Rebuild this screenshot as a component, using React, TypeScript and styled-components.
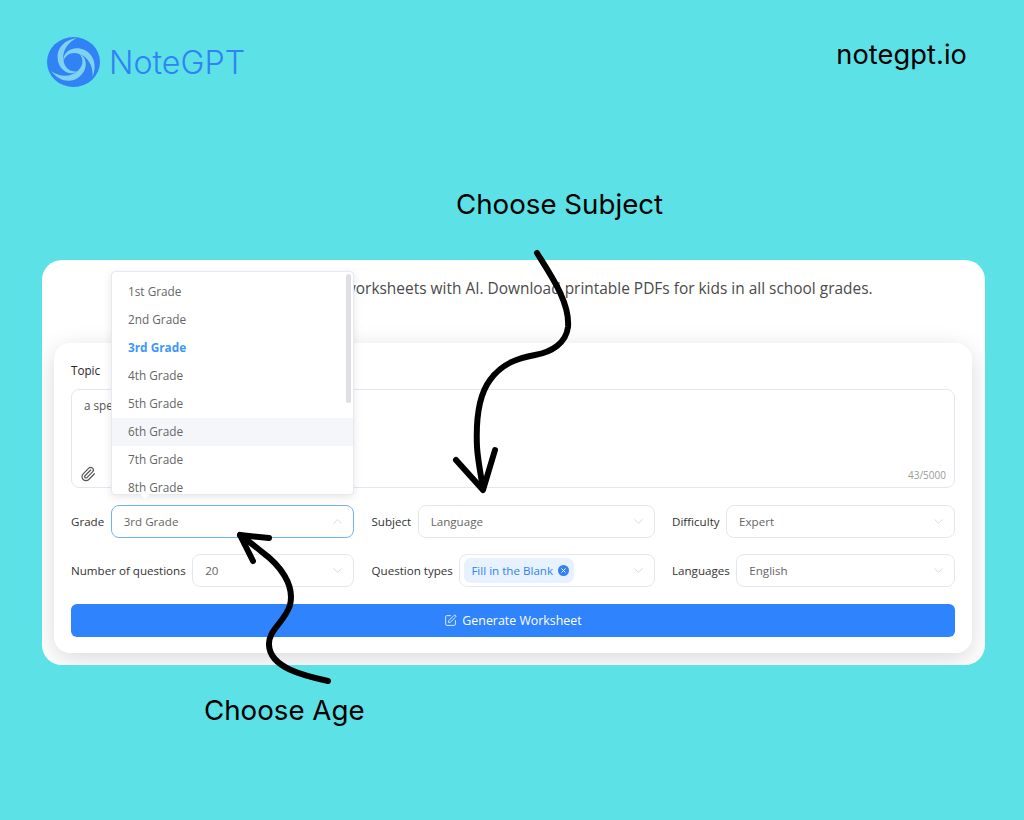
import { createGlobalStyle, styled } from "styled-components";
import { ChevronDown, ChevronUp, Paperclip, SquarePen } from "lucide-react";

const GlobalStyle = createGlobalStyle`
  html, body {
    margin: 0;
    padding: 0;
    background: #5ce1e6;
  }
  * {
    box-sizing: border-box;
  }
`;

const Page = styled.main`
  position: relative;
  width: 1024px;
  height: 820px;
  overflow: hidden;
  background: #5ce1e6;
  font-family: "Open Sans", sans-serif;
`;

const Header = styled.header`
  display: flex;
  align-items: center;
  justify-content: space-between;
  height: 124px;
  padding: 0 57px 0 47px;
`;

const Brand = styled.div`
  display: flex;
  align-items: center;
  gap: 9px;
  color: #3082f5;
  font-family: "Inter", sans-serif;
  font-size: 32.2px;
  font-weight: 300;
`;

const Site = styled.div`
  margin-top: -16px;
  color: #000;
  font-family: "Inter", sans-serif;
  font-size: 27.2px;
  letter-spacing: 0.1px;
`;

const Caption = styled.div<{ $left: number }>`
  padding-left: ${(p) => p.$left}px;
  color: #000;
  font-family: "Inter", sans-serif;
  font-size: 27.7px;
  line-height: 40px;
  white-space: nowrap;
`;

const TopCaption = styled(Caption)`
  height: 136px;
  padding-top: 60px;
`;

const BottomCaption = styled(Caption)`
  margin-top: 25px;
`;

const Card = styled.section`
  position: relative;
  height: 405px;
  margin: 0 39px 0 42px;
  padding: 83px 13px 12px 12px;
  overflow: hidden;
  border-radius: 20px;
  background: #fff;
`;

const Intro = styled.p`
  position: absolute;
  top: 17px;
  left: 0;
  right: 0;
  margin: 0;
  text-align: center;
  color: #4a4a4a;
  font-size: 15.45px;
  line-height: 22px;
  white-space: nowrap;
`;

const Panel = styled.div`
  display: flex;
  flex-direction: column;
  height: 310px;
  padding: 17px 17px 16px;
  border-radius: 16px;
  background: #fff;
  box-shadow: 0 6px 24px rgba(0, 0, 0, 0.15);
`;

const TopicLabel = styled.label`
  height: 29px;
  padding-top: 2px;
  color: #262626;
  font-size: 11.7px;
  line-height: 17px;
`;

const TopicBox = styled.div`
  position: relative;
  height: 99px;
  padding: 7px 12px;
  border: 1px solid #e6e6ee;
  border-radius: 8px;
  color: #555;
  font-size: 11.7px;
  line-height: 16px;
`;

const AttachIcon = styled(Paperclip)`
  position: absolute;
  left: 8px;
  bottom: 5px;
  color: #555;
`;

const Counter = styled.span`
  position: absolute;
  right: 8px;
  bottom: 5px;
  color: #9a9a9a;
  font-size: 10px;
  line-height: 14px;
`;

const FieldGrid = styled.div`
  display: grid;
  grid-template-columns: repeat(3, 1fr);
  column-gap: 17.5px;
  row-gap: 16px;
  margin-top: 17px;
`;

const Field = styled.div`
  display: flex;
  align-items: center;
  gap: 6.5px;
  height: 33px;
`;

const FieldLabel = styled.span`
  flex: none;
  color: #333;
  font-size: 11.6px;
  white-space: nowrap;
`;

const Select = styled.div<{ $open?: boolean }>`
  flex: 1;
  display: flex;
  align-items: center;
  justify-content: space-between;
  height: 33px;
  padding: 0 8px 0 12px;
  border: 1px solid ${(p) => (p.$open ? "#70b1ff" : "#e6e6ee")};
  border-radius: 8px;
  color: #666;
  font-size: 11.6px;
`;

const Tag = styled.span`
  display: flex;
  align-items: center;
  gap: 5px;
  height: 25px;
  margin-left: -8px;
  padding: 0 5px 0 7px;
  border-radius: 7px;
  background: #e8f2ff;
  color: #3082f5;
  font-size: 11.6px;
`;

const TagClose = styled.span`
  display: flex;
  align-items: center;
  justify-content: center;
  width: 11px;
  height: 11px;
  border-radius: 50%;
  background: #3082f5;
`;

const Caret = styled.span`
  display: flex;
  color: #c4c4cc;
`;

const GenerateButton = styled.button`
  display: flex;
  align-items: center;
  justify-content: center;
  gap: 5px;
  height: 33px;
  margin-top: 17px;
  border: 0;
  border-radius: 6px;
  background: #2f83fc;
  color: #fff;
  font-family: inherit;
  font-size: 12.4px;
`;

const Menu = styled.ul`
  position: absolute;
  top: 271px;
  left: 111px;
  width: 243px;
  height: 224px;
  margin: 0;
  padding: 6px 0 0;
  overflow: hidden;
  list-style: none;
  background: #fff;
  border: 1px solid #e8e8f0;
  border-radius: 4px;
  box-shadow: 0 2px 8px rgba(0, 0, 0, 0.1);

  &::after {
    content: "";
    position: absolute;
    top: 2px;
    right: 2px;
    width: 5px;
    height: 129px;
    border-radius: 3px;
    background: #dedfe2;
  }
`;

const MenuItem = styled.li<{ $active?: boolean; $hover?: boolean }>`
  height: 28px;
  padding-left: 16px;
  background: ${(p) => (p.$hover ? "#f5f6fa" : "transparent")};
  color: ${(p) => (p.$active ? "#3b96ff" : "#666")};
  font-size: 11.8px;
  font-weight: ${(p) => (p.$active ? 700 : 400)};
  line-height: 26px;
`;

const MenuPointer = styled.span`
  position: absolute;
  top: 495px;
  left: 142px;
  width: 6px;
  height: 6px;
  background: #fff;
  transform: translateY(-3px) rotate(45deg);
`;

const Arrows = styled.svg`
  position: absolute;
  inset: 0;
  pointer-events: none;
`;

const grades = ["1st", "2nd", "3rd", "4th", "5th", "6th", "7th", "8th"];

const swirlArm =
  "M-10 -1C-11 -11 1 -17 11 -12C20 -8 24 3 19 15C20 5 15 -5 6 -8C-2 -11 -8 -7 -10 -1Z";

const LogoMark = () => (
  <svg width="53" height="50" viewBox="-26.5 -25 53 50">
    <ellipse rx="26.5" ry="25" fill="#3082f5" />
    <g fill="#7fd2ef">
      <path d={swirlArm} />
      <path d={swirlArm} transform="rotate(120)" />
      <path d={swirlArm} transform="rotate(240)" />
    </g>
  </svg>
);

const Chevron = ({ up }: { up?: boolean }) => (
  <Caret>{up ? <ChevronUp size={15} strokeWidth={1} /> : <ChevronDown size={15} strokeWidth={1} />}</Caret>
);

const App = () => {
  return (
    <Page>
      <GlobalStyle />
      <Header>
        <Brand>
          <LogoMark />
          NoteGPT
        </Brand>
        <Site>notegpt.io</Site>
      </Header>
      <TopCaption $left={456}>Choose Subject</TopCaption>
      <Card>
        <Intro>Generate and personalize worksheets with AI. Download printable PDFs for kids in all school grades.</Intro>
        <Panel>
          <TopicLabel>Topic</TopicLabel>
          <TopicBox>
            a special topic
            <AttachIcon size={16} strokeWidth={1.8} />
            <Counter>43/5000</Counter>
          </TopicBox>
          <FieldGrid>
            <Field>
              <FieldLabel>Grade</FieldLabel>
              <Select $open>
                3rd Grade
                <Chevron up />
              </Select>
            </Field>
            <Field>
              <FieldLabel>Subject</FieldLabel>
              <Select>
                Language
                <Chevron />
              </Select>
            </Field>
            <Field>
              <FieldLabel>Difficulty</FieldLabel>
              <Select>
                Expert
                <Chevron />
              </Select>
            </Field>
            <Field>
              <FieldLabel>Number of questions</FieldLabel>
              <Select>
                20
                <Chevron />
              </Select>
            </Field>
            <Field>
              <FieldLabel>Question types</FieldLabel>
              <Select>
                <Tag>
                  Fill in the Blank
                  <TagClose>
                    <svg width="7" height="7" viewBox="0 0 7 7">
                      <path d="M1.5 1.5l4 4M5.5 1.5l-4 4" stroke="#fff" strokeWidth="1" />
                    </svg>
                  </TagClose>
                </Tag>
                <Chevron />
              </Select>
            </Field>
            <Field>
              <FieldLabel>Languages</FieldLabel>
              <Select>
                English
                <Chevron />
              </Select>
            </Field>
          </FieldGrid>
          <GenerateButton>
            <SquarePen size={13} strokeWidth={1.5} />
            Generate Worksheet
          </GenerateButton>
        </Panel>
      </Card>
      <BottomCaption $left={204}>Choose Age</BottomCaption>
      <Menu>
        {grades.map((grade) => (
          <MenuItem key={grade} $active={grade === "3rd"} $hover={grade === "6th"}>
            {grade} Grade
          </MenuItem>
        ))}
      </Menu>
      <MenuPointer />
      <Arrows width="1024" height="820" viewBox="0 0 1024 820">
        <g fill="none" stroke="#000" strokeWidth="6" strokeLinecap="round" strokeLinejoin="round">
          <path d="M537 253C552 277 570 303 568 327C566 343 552 352 535 355C520 358 503 362 490 380C478 396 476 425 477 447C478 462 481 475 483 489" />
          <path d="M456 460L483 490L495 450" />
          <path d="M328 681C305 676 270 668 269 645C268 630 285 622 290 605C295 585 280 565 262 552C255 546 247 540 240 535" />
          <path d="M269 538L240 535L253 561" />
        </g>
      </Arrows>
    </Page>
  );
};

export default App;
